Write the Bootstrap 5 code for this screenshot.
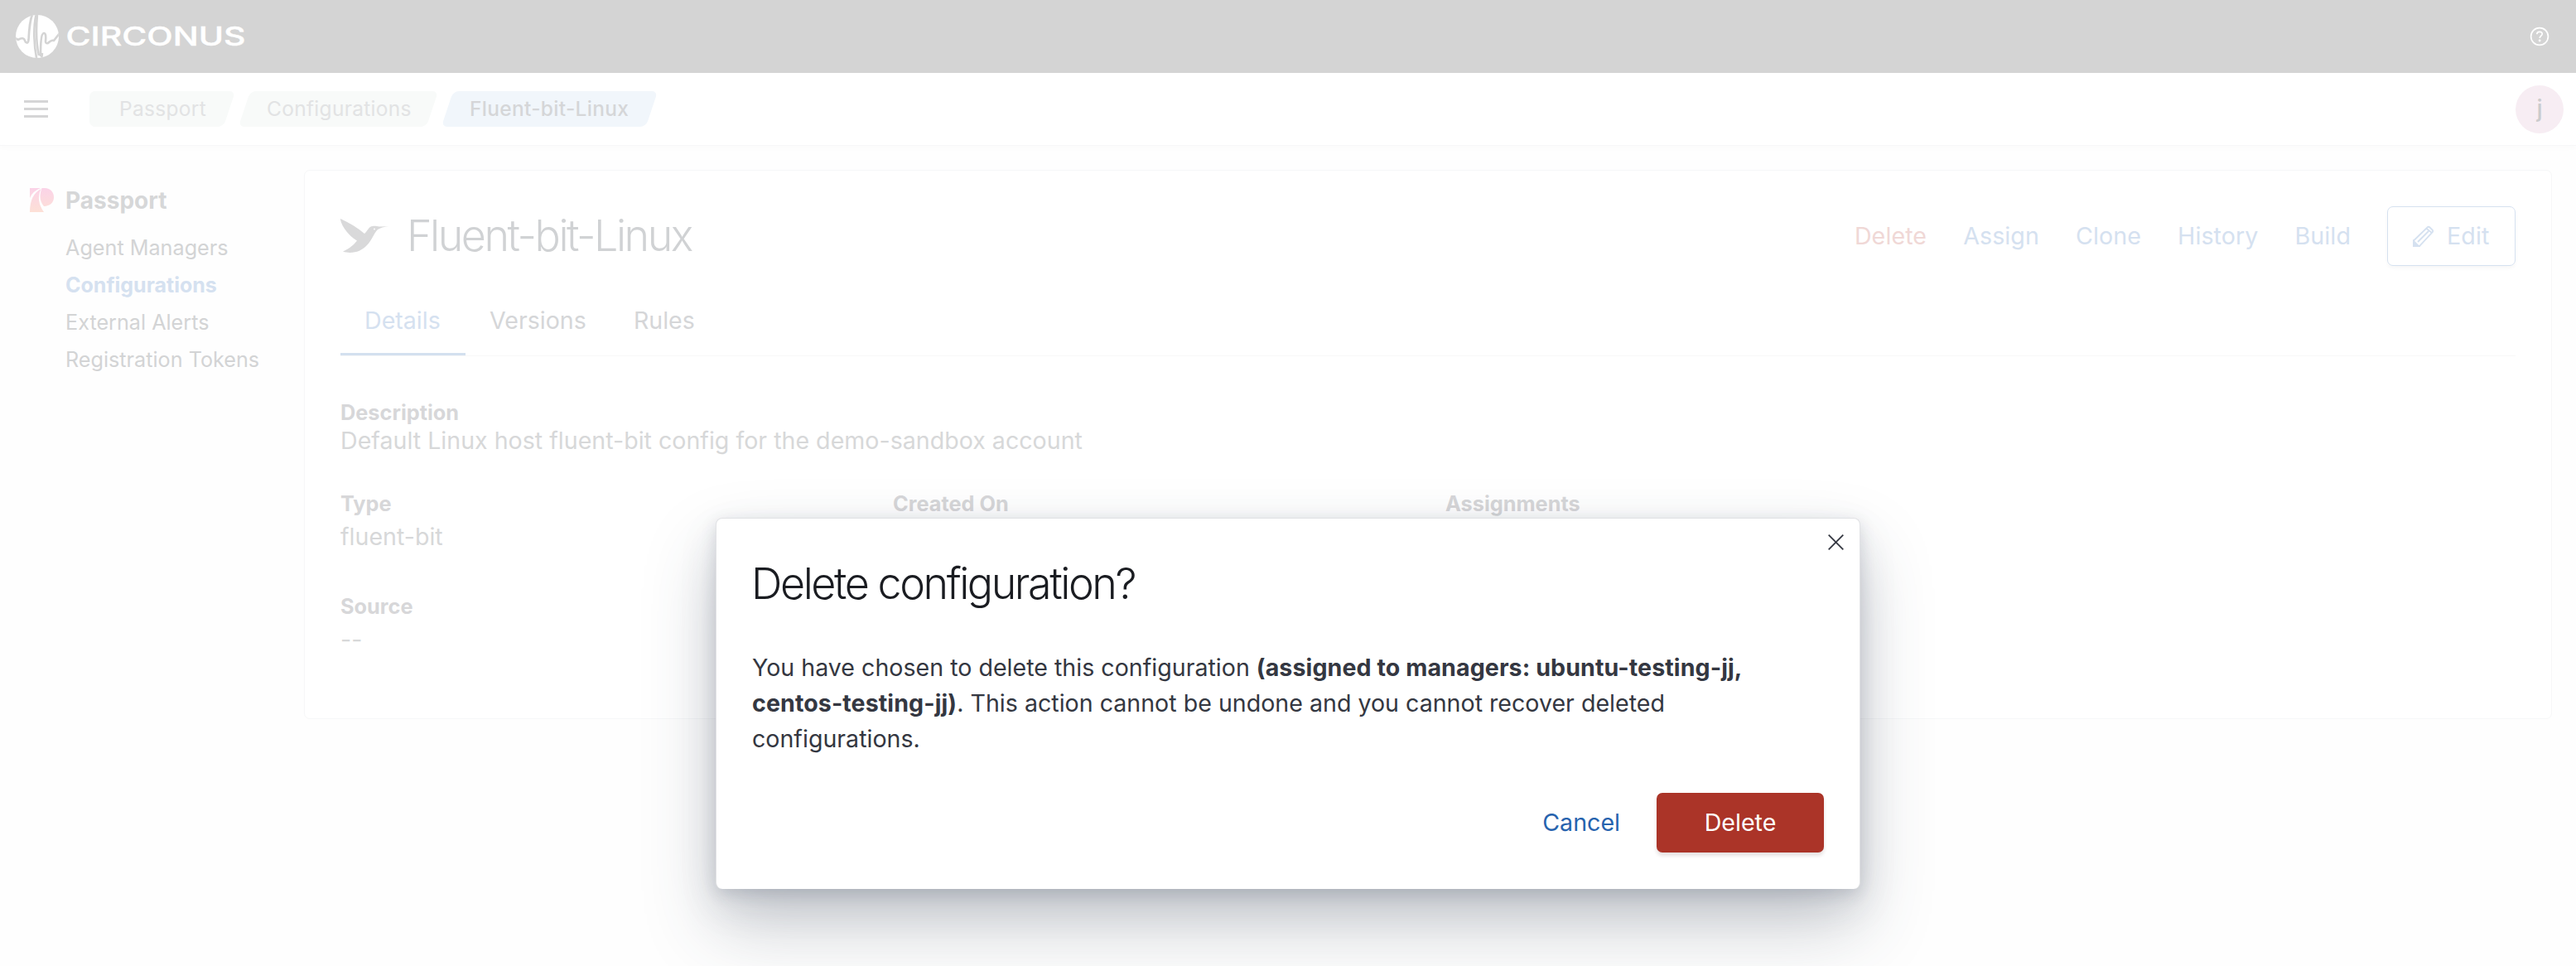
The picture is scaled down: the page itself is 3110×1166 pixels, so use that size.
<!DOCTYPE html>
<html lang="en">
<head>
<meta charset="utf-8">
<title>Fluent-bit-Linux - Circonus</title>
<link rel="stylesheet" href="https://cdn.jsdelivr.net/npm/bootstrap@5.3.0/dist/css/bootstrap.min.css">
<style>
body{font-family:Inter,"Liberation Sans",sans-serif;font-size:28.6px;line-height:1.5;color:#d5d6d8;background:#fefefe;height:1166px;overflow:hidden}
svg{display:block;flex:none}
.topbar{height:88px;background:#d4d4d4;padding:0 32px 0 19px}
.subbar{height:87px;background:#fff;padding:0 15px 0 29px;box-shadow:0 1px 0 #f7f7f8,0 3px 8px rgba(0,0,0,.02)}
.crumbs{margin-left:50px;gap:18px}
.crumb{position:relative;height:43px;line-height:42px;font-size:24.5px;letter-spacing:.3px;color:#e2e3e4;z-index:0}
.crumb::before{content:"";position:absolute;inset:0;background:#f8faf9;border-radius:7px;transform:skewX(-18.4deg);z-index:-1}
.crumb.first::after{content:"";position:absolute;left:0;top:0;bottom:0;width:60px;background:#f8faf9;border-radius:7px;z-index:-1}
.crumb.first::before{left:7px}
.crumb.current{color:#d5d6d8;font-weight:500}
.crumb.current::before{background:#f1f6fb}
.avatar{width:58px;height:58px;background:#f7edf3;color:#cbcbcc;font-weight:500}
.side{width:367px;padding:50px 0 0 36px}
.side .head{font-weight:700;font-size:28px;gap:14px;color:#d6d7d8;height:33px}
.side ul{margin:19px 0 0 43px}
.side li{font-size:25.2px;line-height:45px;color:#d3d4d5}
.side li.on{color:#d5e1f0;font-weight:700;font-size:25px}
.panel{width:2714px;height:663px;margin-top:30px;border:1px solid #f6f7f8;border-radius:7px;background:#fff;padding:43px 43px 0}
.ttl{font-size:52px;font-weight:300;letter-spacing:-2.5px;line-height:72px;color:#d0d2d4;margin-left:21px}
.act{color:#d5e1f0;gap:44px}
.act .danger{color:#f0d8d6}
.act span{letter-spacing:.1px}
.editbtn{width:155px;height:72px;border:1px solid #d5e1f0;border-radius:7px;box-shadow:0 3px 4px rgba(0,0,0,.03);padding-left:29px;gap:15px}
.tabrow{border-bottom:1px solid #f7f7f8;margin-top:27px;height:82px}
.tabrow span{display:block;height:81px;line-height:78px}
.tabrow span + span{margin-left:29px}
.tabrow span + span + span{margin-left:57px}
.tabrow .on{color:#d5e1f0;border-bottom:3px solid #d3e0ef;padding:0 29px;width:151px}
.lbl{font-size:25.3px;font-weight:700;line-height:36px;color:#d7d7d9}
.txt{color:#d7d8d9;line-height:42px;margin-top:1px}
.fcol{width:667px}
.scrim{position:absolute;inset:0;overflow:hidden}
.dlg{position:relative;width:1382px;height:448px;margin:625px auto 0;background:#fff;border-radius:8px;border:1px solid #e1e2e5;border-bottom:0;padding:47px 43px 0 44px;color:#343741;
 box-shadow:0 5.4px 18px rgba(50,60,85,.15),0 18.8px 48px rgba(50,60,80,.1),0 43.6px 86px rgba(50,60,80,.26)}
.dlg h2{font-size:52px;font-weight:300;letter-spacing:-2.45px;line-height:64px;color:#1a1c21;margin:0 0 0 -2px}
.dlg p{line-height:43px;margin:47px 0 0 -1px}
.dlg p b{font-weight:700;letter-spacing:.08px}
.xbtn{position:absolute;right:19px;top:19px}
.foot{margin-top:44px;gap:44px}
.foot .cancel{color:#2763ae}
.foot .del{width:202px;height:72px;border-radius:7px;background:#ab3428;color:#fff;box-shadow:0 4px 4px rgba(60,20,20,.12)}
</style>
<script src="https://cdn.jsdelivr.net/npm/bootstrap@5.3.0/dist/js/bootstrap.bundle.min.js"></script>
</head>
<body>
<header class="topbar d-flex align-items-center justify-content-between">
  <svg width="280" height="60" viewBox="0 0 280 60">
    <defs><clipPath id="c"><circle cx="26" cy="30" r="26"/></clipPath></defs>
    <circle cx="26" cy="30" r="26" fill="#fff"/>
    <g clip-path="url(#c)" fill="none" stroke="#d4d4d4" stroke-width="2.600" stroke-linejoin="round">
      <path d="M-1 32 L3 34 Q7 31 10 33 L12 37 Q15 39 15.500 34 C16 22 18 6 21 2"/>
      <path d="M24.500 4 C21 20 22 42 25.500 58"/>
      <path d="M26 3 C24.500 20 25 40 28 53"/>
      <path d="M30 54 C30 44 30 26 34 26 Q37 26 36 36 Q36 39 39 38 Q43 34 46 35 L53 26"/>
      <path d="M31 58 L32 50"/>
    </g>
    <text x="60.500" y="41" font-family="Inter, sans-serif" font-size="31" font-weight="450" fill="#fff" stroke="#fff" stroke-width=".4" textLength="217" lengthAdjust="spacingAndGlyphs">CIRCONUS</text>
  </svg>
  <svg width="24" height="24" viewBox="0 0 24 24" fill="none" stroke="#fff" stroke-width="1.700"><circle cx="12" cy="12" r="10.400"/><path d="M8.800 9.300c0-4 6.600-3.800 6.400-.3-.2 2.400-3 2.300-3 5"/><circle cx="12.100" cy="17" r=".6"/></svg>
</header>
<div class="subbar d-flex align-items-center">
  <svg width="29" height="22" fill="#d5d5d6"><path d="M0 0h29v3H0zM0 9h29v3H0zM0 18h29v3H0z"/></svg>
  <div class="crumbs d-flex">
    <div class="crumb first" style="width:169px;padding-left:36px">Passport</div>
    <div class="crumb" style="width:227px;padding-left:27px">Configurations</div>
    <div class="crumb current" style="width:247px;padding-left:27px">Fluent-bit-Linux</div>
  </div>
  <div class="avatar rounded-circle ms-auto d-flex align-items-center justify-content-center">j</div>
</div>
<main class="d-flex">
  <nav class="side flex-shrink-0">
    <div class="head d-flex align-items-center">
      <svg width="29" height="29" viewBox="0 0 29 29"><defs><linearGradient id="g" x2="0" y2="1"><stop stop-color="#fbd3e8"/><stop offset="1" stop-color="#fde0d6"/></linearGradient></defs><path fill="url(#g)" d="M0 0H13Q3 4 0 12zM0 29Q0 8 13.500 1Q7 15 17 29zM14.500 0H18C25 0 29 5 29 11C29 18 24 21.500 17 22C11 15 12 7 14.500 0z"/></svg>
      <span>Passport</span>
    </div>
    <ul class="list-unstyled mb-0">
      <li>Agent Managers</li>
      <li class="on">Configurations</li>
      <li>External Alerts</li>
      <li>Registration Tokens</li>
    </ul>
  </nav>
  <section class="panel">
    <div class="d-flex align-items-center">
      <svg width="59" height="42" viewBox="0 0 59 42"><path fill="#d9d9da" d="M0 0C11 5 21 11 29 18C33 15 34 9 39 9C42 8.500 44 9.500 47 9.500L58 9.200Q50 10 45 13C40 18 38 26 32 32C25 40 13 43 3 39.500C9 37 15 33 20 26.500C10 21 0 7 0 0z"/><circle cx="41" cy="12.500" r=".9" fill="#fff"/></svg>
      <div class="ttl">Fluent-bit-Linux</div>
      <div class="ms-auto d-flex align-items-center act">
        <span class="danger">Delete</span><span>Assign</span><span>Clone</span><span>History</span><span>Build</span>
        <div class="editbtn d-flex align-items-center">
          <svg width="27" height="27" viewBox="0 0 27 27" fill="none" stroke="#d5e1f0" stroke-width="1.800"><path d="M2 18.500L18.500 2.500Q20 1 21.500 2.500L24.500 5.500Q26 7 24.500 8.500L9 25H2z M17 3.500L24 9 M7 20L20 7"/><path d="M2 19v6h6z" fill="#d5e1f0"/></svg>
          <span>Edit</span>
        </div>
      </div>
    </div>
    <div class="tabrow d-flex"><span class="on">Details</span><span>Versions</span><span>Rules</span></div>
    <div class="lbl" style="margin-top:50px">Description</div>
    <div class="txt" style="margin-top:-5px">Default Linux host fluent-bit config for the demo-sandbox account</div>
    <div class="d-flex" style="margin-top:37px">
      <div class="fcol"><div class="lbl">Type</div><div class="txt">fluent-bit</div></div>
      <div class="fcol"><div class="lbl">Created On</div></div>
      <div class="fcol"><div class="lbl">Assignments</div></div>
    </div>
    <div class="lbl" style="margin-top:45px">Source</div>
    <div class="txt">--</div>
  </section>
</main>
<div class="scrim">
  <div class="dlg" role="dialog">
    <svg class="xbtn" width="19" height="19" viewBox="0 0 19 19" stroke="#343741" stroke-width="1.800"><path d="M.7.700L18.300 18.300M18.300.7L.7 18.300"/></svg>
    <h2>Delete configuration?</h2>
    <p>You have chosen to delete this configuration <b>(assigned to managers: ubuntu-testing-jj,<br>centos-testing-jj)</b>. This action cannot be undone and you cannot recover deleted<br>configurations.</p>
    <div class="foot d-flex justify-content-end align-items-center"><span class="cancel">Cancel</span><div class="del d-flex align-items-center justify-content-center">Delete</div></div>
  </div>
</div>
</body>
</html>
